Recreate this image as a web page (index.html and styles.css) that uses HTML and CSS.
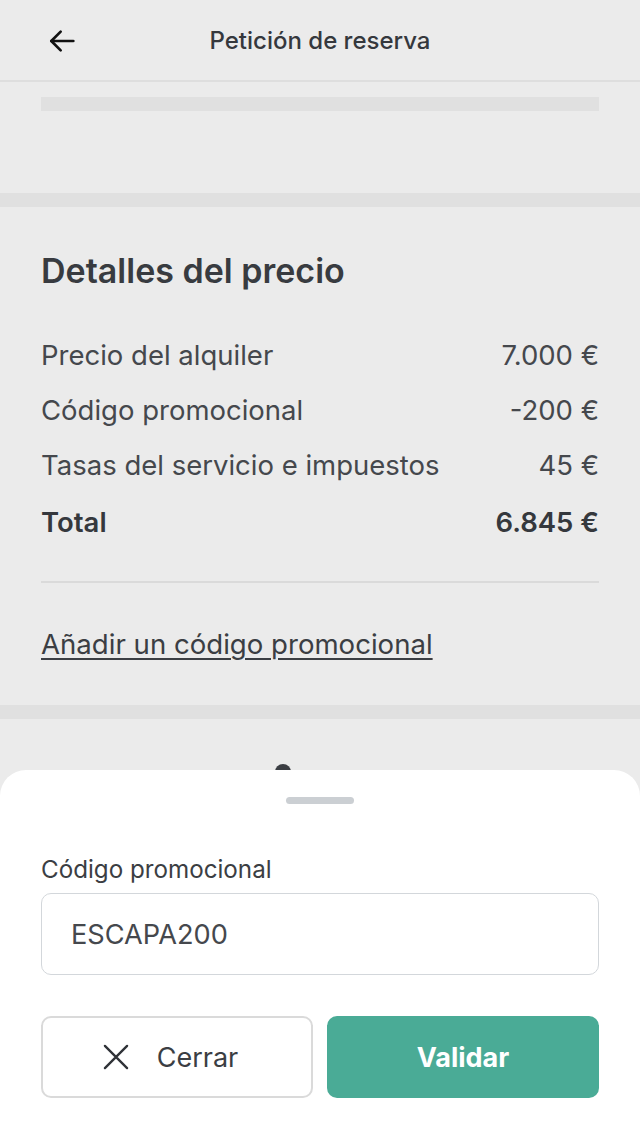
FILE: index.html
```html
<!DOCTYPE html>
<html lang="es">
<head>
<meta charset="utf-8">
<title>Petición de reserva</title>
<link rel="stylesheet" href="styles.css">
</head>
<body>
<div class="page">
  <header class="topbar">
    <button class="back" aria-label="Volver">
      <svg width="32" height="32" viewBox="0 0 24 24" fill="none" stroke="#111" stroke-width="2" stroke-linecap="round" stroke-linejoin="round"><path d="M20.5 12H4"/><path d="M11 5l-7 7 7 7"/></svg>
    </button>
    <h1 class="title">Petición de reserva</h1>
  </header>

  <section class="block block-top">
    <div class="skeleton"></div>
  </section>
  <div class="band"></div>

  <section class="block block-price">
    <h2 class="heading">Detalles del precio</h2>
    <div class="rows">
      <div class="row"><span>Precio del alquiler</span><span>7.000 €</span></div>
      <div class="row"><span>Código promocional</span><span>-200 €</span></div>
      <div class="row"><span>Tasas del servicio e impuestos</span><span>45 €</span></div>
      <div class="row total"><span>Total</span><span>6.845 €</span></div>
    </div>
    <hr class="divider">
    <a class="promo-link" href="#">Añadir un código promocional</a>
  </section>
  <div class="band"></div>

  <section class="block block-next">
    <span class="peek"></span>
  </section>
</div>

<div class="sheet">
  <div class="handle"></div>
  <label class="label" for="code">Código promocional</label>
  <div class="input" id="code">ESCAPA200</div>
  <div class="actions">
    <button class="btn btn-close">
      <svg width="28" height="28" viewBox="0 0 24 24" fill="none" stroke="#2f3237" stroke-width="2" stroke-linecap="round"><path d="M2.5 2.5l19 19M21.5 2.5l-19 19"/></svg>
      <span>Cerrar</span>
    </button>
    <button class="btn btn-validate">Validar</button>
  </div>
</div>
</body>
</html>
```

FILE: styles.css
```css
* { box-sizing: border-box; }
html, body { margin: 0; padding: 0; }
body {
  background: #ebebeb;
  font-family: Inter, "Noto Sans", sans-serif;
  color: #3b3e43;
  width: 640px;
  height: 1139px;
  overflow: hidden;
}
.page { background: #ebebeb; }

.topbar {
  height: 82px;
  border-bottom: 2px solid #dedede;
  display: flex;
  align-items: center;
  justify-content: center;
  position: relative;
}
.back {
  position: absolute;
  left: 46px;
  top: 25px;
  border: 0;
  background: none;
  padding: 0;
  display: flex;
}
.title {
  margin: 0;
  font-size: 24px;
  font-weight: 500;
  color: #35383d;
}

.block { padding: 0 41px; }
.block-top { height: 111px; padding-top: 15px; }
.skeleton { height: 14px; background: #e0e0e0; }
.band { height: 14px; background: #e0e0e0; }

.block-price { padding-top: 46px; padding-bottom: 45px; }
.heading {
  margin: 0;
  font-size: 34px;
  font-weight: 600;
  line-height: 36px;
  color: #383b40;
}
.rows {
  margin-top: 50px;
  display: flex;
  flex-direction: column;
  gap: 23px;
}
.row {
  display: flex;
  justify-content: space-between;
  font-size: 27.5px;
  line-height: 32px;
  color: #45484d;
}
.row.total { font-weight: 600; color: #35383d; margin-top: 2px; }
.divider {
  margin: 43px 0 0;
  border: 0;
  border-top: 2px solid #dadada;
}
.promo-link {
  display: inline-block;
  margin-top: 45px;
  font-size: 27.6px;
  line-height: 32px;
  color: #3b3e43;
  text-decoration: underline;
  text-decoration-thickness: 2px;
  text-underline-offset: 4px;
}

.block-next { height: 420px; padding-top: 45px; }
.peek {
  display: block;
  width: 16px;
  height: 16px;
  border-radius: 50%;
  background: #3b3e43;
  margin-left: 234px;
}

.sheet {
  position: fixed;
  left: 0;
  right: 0;
  top: 770px;
  bottom: 0;
  background: #fff;
  border-radius: 26px 26px 0 0;
  padding: 27px 41px 0;
  display: flex;
  flex-direction: column;
}
.handle {
  width: 68px;
  height: 7px;
  border-radius: 4px;
  background: #cbcfd3;
  align-self: center;
}
.label {
  margin-top: 52px;
  font-size: 24.2px;
  line-height: 28px;
  color: #3b3e43;
}
.input {
  margin-top: 9px;
  height: 82px;
  border: 1.5px solid #d3d7db;
  border-radius: 10px;
  display: flex;
  align-items: center;
  padding-left: 29px;
  font-size: 27.2px;
  color: #45484d;
}
.actions {
  margin-top: 41px;
  display: grid;
  grid-template-columns: 1fr 1fr;
  gap: 14px;
}
.btn {
  height: 82px;
  border-radius: 10px;
  font-family: Inter, "Noto Sans", sans-serif;
  font-size: 27px;
  display: flex;
  align-items: center;
  justify-content: center;
}
.btn-close {
  background: #fff;
  border: 2px solid #dadada;
  color: #3b3e43;
  gap: 27px;
  padding-right: 20px;
}
.btn-validate {
  background: #4aab96;
  border: 0;
  color: #fff;
  font-weight: 700;
}
```
